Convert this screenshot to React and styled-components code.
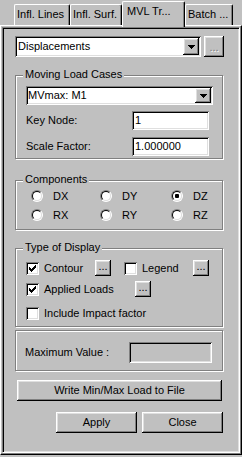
import React from 'react';
import styled, { createGlobalStyle } from 'styled-components';

const GlobalStyle = createGlobalStyle`
  html, body {
    margin: 0;
    padding: 0;
    background: #c0c0c0;
  }
  body {
    font-family: "Liberation Sans", Arial, sans-serif;
    font-size: 11px;
    color: #000;
  }
`;

const raised = `
  box-shadow: inset -1px -1px #000, inset 1px 1px #fff, inset -2px -2px #808080, inset 2px 2px #dfdfdf;
`;

const sunken = `
  box-shadow: inset 1px 1px #808080, inset -1px -1px #fff, inset 2px 2px #000, inset -2px -2px #dfdfdf;
`;

const Window = styled.div`
  width: 242px;
  height: 457px;
  box-sizing: border-box;
  display: flex;
  flex-direction: column;
  background: #c0c0c0;
  overflow: hidden;
`;

const TabStrip = styled.div`
  display: flex;
  align-items: flex-end;
  height: 25px;
  padding-left: 14px;
  flex-shrink: 0;
`;

const Tab = styled.div`
  position: relative;
  z-index: ${p => (p.$active ? 2 : 0)};
  box-sizing: border-box;
  width: ${p => p.$w}px;
  height: ${p => (p.$active ? 26 : 21)}px;
  margin-bottom: ${p => (p.$active ? -2 : 0)}px;
  padding: ${p => (p.$active ? '3px 0 0 4px' : '3px 0 0 2px')};
  background: #c0c0c0;
  border-top: 1px solid #fff;
  border-left: 1px solid #fff;
  border-right: 1px solid #000;
  border-radius: 2px 2px 0 0;
  box-shadow: inset -1px 0 #808080;
  line-height: 13px;
  white-space: nowrap;
  overflow: hidden;
`;

const Panel = styled.div`
  flex: 1;
  display: flex;
  margin-bottom: 2px;
  padding: 1px 1px 1px 1px;
  border-top: 1px solid #fff;
  border-left: 1px solid #fff;
  border-right: 1px solid #000;
  border-bottom: 1px solid #000;
  box-shadow: inset -1px -1px #808080;
`;

const Inner = styled.div`
  flex: 1;
  display: flex;
  flex-direction: column;
  padding: 8px 15px 0 12px;
  border-top: 1px solid #808080;
  border-left: 1px solid #808080;
  border-right: 1px solid #fff;
  border-bottom: 1px solid #fff;
  box-shadow: inset 1px 1px #000, inset -1px -1px #dfdfdf;
`;

const ComboRow = styled.div`
  display: flex;
  gap: 3px;
`;

const Combo = styled.div`
  box-sizing: border-box;
  display: flex;
  align-items: center;
  width: ${p => (p.$w ? `${p.$w}px` : 'auto')};
  flex: ${p => (p.$w ? 'none' : 1)};
  height: ${p => p.$h}px;
  padding: 2px 2px 2px ${p => p.$pl}px;
  background: #fff;
  ${sunken}
`;

const ComboText = styled.span`
  flex: 1;
  line-height: 13px;
  white-space: nowrap;
`;

const ArrowButton = styled.div`
  box-sizing: border-box;
  width: 16px;
  height: 100%;
  display: flex;
  align-items: center;
  justify-content: center;
  background: #c0c0c0;
  ${raised}
`;

const Button = styled.div`
  box-sizing: border-box;
  display: flex;
  align-items: center;
  justify-content: center;
  flex: none;
  width: ${p => p.$w}px;
  height: ${p => p.$h}px;
  margin: ${p => p.$m || '0'};
  background: #c0c0c0;
  color: ${p => (p.$disabled ? '#808080' : '#000')};
  text-shadow: ${p => (p.$disabled ? '1px 1px #fff' : 'none')};
  line-height: 13px;
  white-space: nowrap;
  ${raised}
`;

const DotsButton = styled(Button)`
  align-items: flex-end;
  padding-bottom: 3px;
`;

const Group = styled.div`
  position: relative;
  box-sizing: border-box;
  margin: ${p => p.$mt}px 1px 0 0;
  padding: ${p => p.$pad};
  border: 1px solid #808080;
  box-shadow: inset 1px 1px #fff, 1px 1px #fff;
`;

const GroupTitle = styled.span`
  position: absolute;
  left: 7px;
  top: -8px;
  padding: 0 2px;
  background: #c0c0c0;
  line-height: 13px;
  white-space: nowrap;
`;

const FieldRow = styled.div`
  display: flex;
  align-items: center;
  margin-top: ${p => p.$mt || 0}px;
`;

const Label = styled.span`
  width: ${p => p.$w}px;
  flex: none;
  line-height: 13px;
  white-space: nowrap;
`;

const Field = styled.div`
  box-sizing: border-box;
  width: ${p => p.$w}px;
  height: ${p => p.$h}px;
  display: flex;
  align-items: center;
  padding-left: 3px;
  background: ${p => (p.$disabled ? '#c0c0c0' : '#fff')};
  line-height: 13px;
  ${sunken}
`;

const RadioGrid = styled.div`
  display: grid;
  grid-template-columns: 69px 71px 1fr;
  row-gap: 6px;
  padding-left: 15px;
`;

const RadioItem = styled.div`
  display: flex;
  align-items: center;
  height: 13px;
  gap: 10px;
`;

const RadioCircle = styled.span`
  position: relative;
  box-sizing: border-box;
  width: 12px;
  height: 12px;
  flex: none;
  border-radius: 50%;
  border: 1px solid;
  border-color: #808080 #fff #fff #808080;
  background: #dfdfdf;

  &::before {
    content: '';
    position: absolute;
    inset: 0;
    box-sizing: border-box;
    border-radius: 50%;
    border: 1px solid;
    border-color: #000 #dfdfdf #dfdfdf #000;
    background: #fff;
  }

  &::after {
    content: '';
    display: ${p => (p.$checked ? 'block' : 'none')};
    position: absolute;
    left: 3px;
    top: 3px;
    width: 4px;
    height: 4px;
    border-radius: 1px;
    background: #000;
  }
`;

const CheckRow = styled.div`
  display: flex;
  align-items: center;
  height: 16px;
  margin-top: ${p => p.$mt || 0}px;
`;

const CheckItem = styled.div`
  display: flex;
  align-items: center;
  gap: 5px;
  width: ${p => (p.$w ? `${p.$w}px` : 'auto')};
  flex: none;
  margin-left: ${p => p.$ml || 0}px;
  white-space: nowrap;
  line-height: 13px;
`;

const CheckBox = styled.span`
  box-sizing: border-box;
  display: block;
  width: 13px;
  height: 13px;
  flex: none;
  background: #fff;
  ${sunken}
`;

const ActionRow = styled.div`
  display: flex;
  justify-content: flex-end;
  gap: 5px;
  margin: 11px 1px 0 0;
`;

function Arrow() {
  return (
    <svg width="7" height="4" viewBox="0 0 7 4" shapeRendering="crispEdges">
      <rect x="0" y="0" width="7" height="1" fill="#000" />
      <rect x="1" y="1" width="5" height="1" fill="#000" />
      <rect x="2" y="2" width="3" height="1" fill="#000" />
      <rect x="3" y="3" width="1" height="1" fill="#000" />
    </svg>
  );
}

const checkTops = [5, 6, 7, 6, 5, 4, 3];

function Check({ checked }) {
  return (
    <CheckBox>
      {checked && (
        <svg width="13" height="13" viewBox="0 0 13 13" shapeRendering="crispEdges">
          {checkTops.map((t, i) => (
            <rect key={i} x={3 + i} y={t} width="1" height="3" fill="#000" />
          ))}
        </svg>
      )}
    </CheckBox>
  );
}

function Radio({ label, checked }) {
  return (
    <RadioItem>
      <RadioCircle $checked={checked} />
      <span>{label}</span>
    </RadioItem>
  );
}

const tabs = [
  { label: 'Infl. Lines', w: 56 },
  { label: 'Infl. Surf.', w: 52 },
  { label: 'MVL Tr...', w: 63, active: true },
  { label: 'Batch ...', w: 48 },
];

const components = [
  { label: 'DX' }, { label: 'DY' }, { label: 'DZ', checked: true },
  { label: 'RX' }, { label: 'RY' }, { label: 'RZ' },
];

export default function App() {
  return (
    <Window>
      <GlobalStyle />
      <TabStrip>
        {tabs.map(t => (
          <Tab key={t.label} $w={t.w} $active={t.active}>{t.label}</Tab>
        ))}
      </TabStrip>
      <Panel>
        <Inner>
          <ComboRow>
            <Combo $h={21} $pl={3}>
              <ComboText>Displacements</ComboText>
              <ArrowButton><Arrow /></ArrowButton>
            </Combo>
            <DotsButton $w={20} $h={21} $disabled>...</DotsButton>
          </ComboRow>

          <Group $mt={18} $pad="10px 9px 2px 10px">
            <GroupTitle>Moving Load Cases</GroupTitle>
            <Combo $h={19} $pl={2}>
              <ComboText>MVmax: M1</ComboText>
              <ArrowButton><Arrow /></ArrowButton>
            </Combo>
            <FieldRow $mt={6}>
              <Label $w={106}>Key Node:</Label>
              <Field $w={77} $h={19}>1</Field>
            </FieldRow>
            <FieldRow $mt={7}>
              <Label $w={106}>Scale Factor:</Label>
              <Field $w={77} $h={19}>1.000000</Field>
            </FieldRow>
          </Group>

          <Group $mt={21} $pad="8px 0 8px 0">
            <GroupTitle>Components</GroupTitle>
            <RadioGrid>
              {components.map(c => (
                <Radio key={c.label} label={c.label} checked={c.checked} />
              ))}
            </RadioGrid>
          </Group>

          <Group $mt={18} $pad="11px 0 5px 10px">
            <GroupTitle>Type of Display</GroupTitle>
            <CheckRow>
              <CheckItem $w={69}><Check checked />Contour</CheckItem>
              <DotsButton $w={16} $h={16}>...</DotsButton>
              <CheckItem $w={69} $ml={13}><Check />Legend</CheckItem>
              <DotsButton $w={16} $h={16}>...</DotsButton>
            </CheckRow>
            <CheckRow $mt={5}>
              <CheckItem $w={109}><Check checked />Applied Loads</CheckItem>
              <DotsButton $w={16} $h={16}>...</DotsButton>
            </CheckRow>
            <CheckRow $mt={8}>
              <CheckItem><Check />Include Impact factor</CheckItem>
            </CheckRow>
          </Group>

          <Group $mt={3} $pad="11px 0 7px 9px">
            <FieldRow>
              <Label $w={104}>Maximum Value :</Label>
              <Field $w={83} $h={21} $disabled />
            </FieldRow>
          </Group>

          <Button $w={205} $h={21} $m="9px 0 0 2px">Write Min/Max Load to File</Button>

          <ActionRow>
            <Button $w={81} $h={21}>Apply</Button>
            <Button $w={81} $h={21}>Close</Button>
          </ActionRow>
        </Inner>
      </Panel>
    </Window>
  );
}
